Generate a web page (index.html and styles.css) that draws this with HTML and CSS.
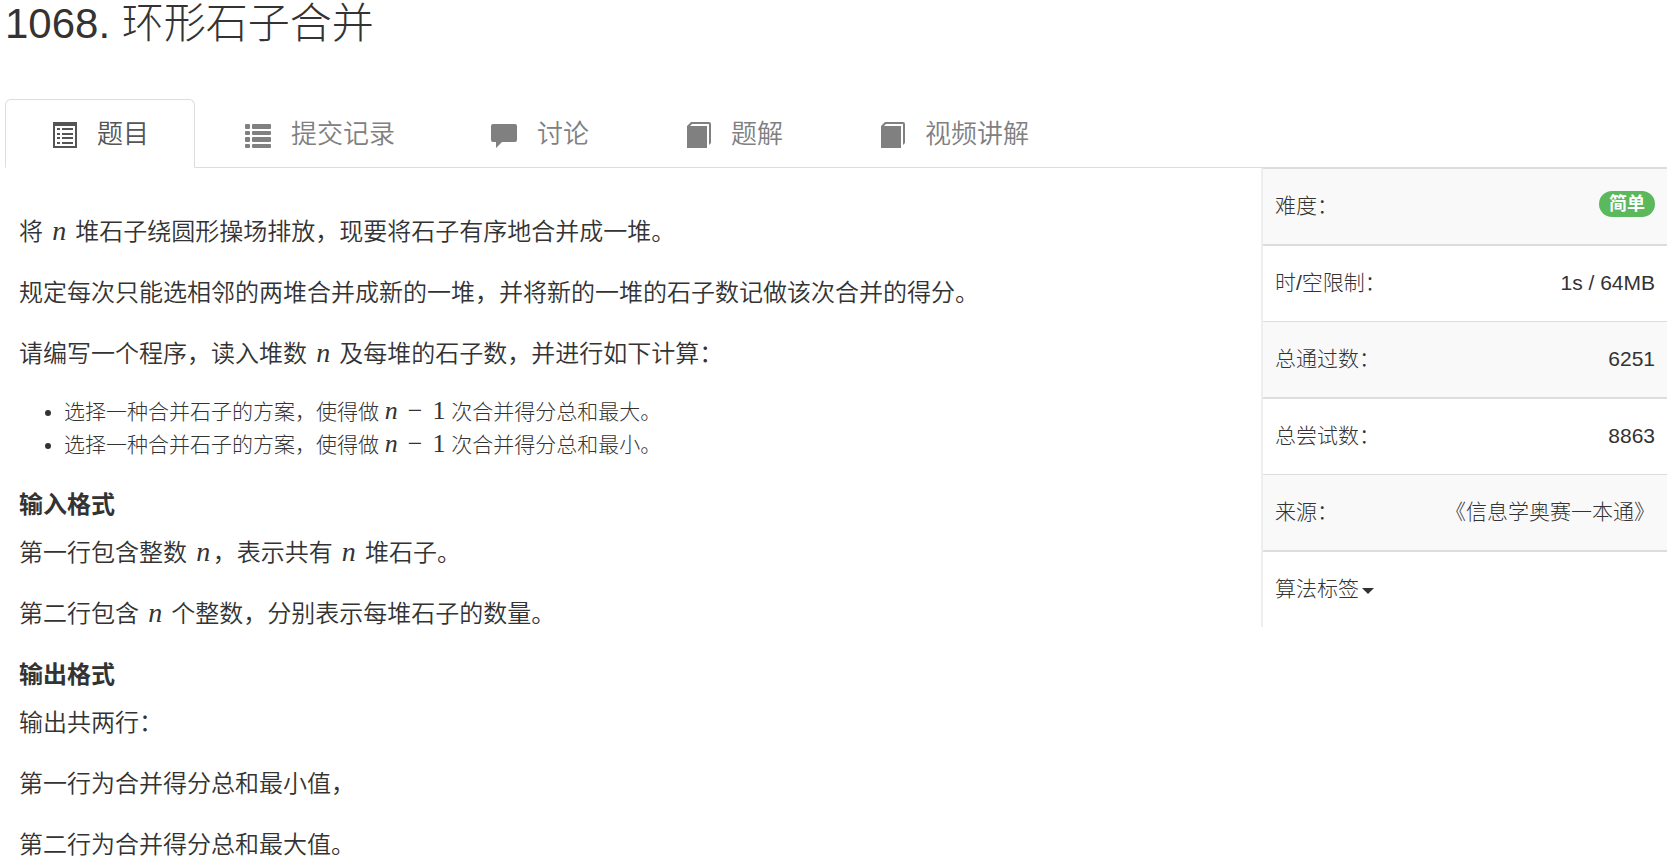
FILE: index.html
```
<!DOCTYPE html>
<html lang="zh-CN">
<head>
<meta charset="utf-8">
<title>1068. 环形石子合并</title>
<link rel="stylesheet" href="styles.css">
</head>
<body>
<div class="page">
  <h1 class="title">1068. 环形石子合并</h1>

  <nav class="tabs">
    <a class="tab tab-active" href="#problem">
      <svg class="icon" viewBox="0 0 26 26"><path fill-rule="evenodd" d="M2 0h24v26H2zM4 4v20h20V4z"/><path d="M6 6h3v2H6zM11 6h11v2H11zM6 11h3v2H6zM11 11h11v2H11zM6 15h3v2H6zM11 15h11v2H11zM6 20h3v2H6zM11 20h11v2H11z"/></svg>
      <span>题目</span>
    </a>
    <a class="tab" href="#submissions">
      <svg class="icon" viewBox="0 0 26 26"><rect x="0" y="2" width="5" height="5" rx="1"/><rect x="7" y="2" width="19" height="5" rx="1"/><rect x="0" y="9" width="5" height="4" rx="1"/><rect x="7" y="9" width="19" height="4" rx="1"/><rect x="0" y="15" width="5" height="5" rx="1"/><rect x="7" y="15" width="19" height="5" rx="1"/><rect x="0" y="22" width="5" height="4" rx="1"/><rect x="7" y="22" width="19" height="4" rx="1"/></svg>
      <span>提交记录</span>
    </a>
    <a class="tab" href="#discussion">
      <svg class="icon" viewBox="0 0 26 26"><path d="M2 2h22q2 0 2 2v14q0 2-2 2H11l-6 6v-6H2q-2 0-2-2V4q0-2 2-2z"/></svg>
      <span>讨论</span>
    </a>
    <a class="tab" href="#solutions">
      <svg class="icon" viewBox="0 0 26 26"><path d="M2 26V4l4-4h18q2 0 2 2v19l-2 2V2H7L5 4h17v22z"/></svg>
      <span>题解</span>
    </a>
    <a class="tab" href="#videos">
      <svg class="icon" viewBox="0 0 26 26"><path d="M2 26V4l4-4h18q2 0 2 2v19l-2 2V2H7L5 4h17v22z"/></svg>
      <span>视频讲解</span>
    </a>
  </nav>

  <div class="columns">
    <main class="problem">
      <p>将 <i class="math">n</i> 堆石子绕圆形操场排放，现要将石子有序地合并成一堆。</p>
      <p>规定每次只能选相邻的两堆合并成新的一堆，并将新的一堆的石子数记做该次合并的得分。</p>
      <p>请编写一个程序，读入堆数 <i class="math">n</i> 及每堆的石子数，并进行如下计算：</p>
      <ul class="goals">
        <li>选择一种合并石子的方案，使得做 <span class="formula"><i>n</i><span class="operator">−</span>1</span> 次合并得分总和最大。</li>
        <li>选择一种合并石子的方案，使得做 <span class="formula"><i>n</i><span class="operator">−</span>1</span> 次合并得分总和最小。</li>
      </ul>
      <h2 class="heading">输入格式</h2>
      <p>第一行包含整数 <i class="math">n</i>，表示共有 <i class="math">n</i> 堆石子。</p>
      <p>第二行包含 <i class="math">n</i> 个整数，分别表示每堆石子的数量。</p>
      <h2 class="heading">输出格式</h2>
      <p>输出共两行：</p>
      <p>第一行为合并得分总和最小值，</p>
      <p>第二行为合并得分总和最大值。</p>
    </main>

    <aside class="info">
      <table class="info-table">
        <tr><th scope="row">难度：</th><td><span class="badge">简单</span></td></tr>
        <tr><th scope="row">时/空限制：</th><td>1s / 64MB</td></tr>
        <tr><th scope="row">总通过数：</th><td>6251</td></tr>
        <tr><th scope="row">总尝试数：</th><td>8863</td></tr>
        <tr><th scope="row">来源：</th><td>《信息学奥赛一本通》</td></tr>
        <tr><th scope="row" colspan="2"><button class="tags" type="button">算法标签<span class="caret"></span></button></th></tr>
      </table>
    </aside>
  </div>
</div>
</body>
</html>
```
FILE: styles.css
```
* {
  box-sizing: border-box;
}

body {
  margin: 0;
  background: #fff;
  color: #333;
  font-family: "Liberation Sans", "Noto Sans CJK SC", sans-serif;
  font-size: 21px;
  font-weight: 300;
  line-height: 29px;
}

.page {
  padding: 0 11px 0 5px;
}

.title {
  margin: 0 0 51px;
  font-size: 42px;
  font-weight: 300;
  line-height: 48px;
}

.tabs {
  display: flex;
  gap: 4px;
  border-bottom: 1px solid #ddd;
}

.tab {
  display: flex;
  align-items: center;
  gap: 20px;
  margin-bottom: -1px;
  padding: 16px 45px 15px;
  border: 1px solid transparent;
  border-radius: 6px 6px 0 0;
  color: #808080;
  font-size: 26px;
  font-weight: 350;
  line-height: 36px;
  text-decoration: none;
}

.tab-active {
  border-color: #ddd;
  border-bottom-color: #fff;
  background: #fff;
  color: #555;
}

.icon {
  width: 26px;
  height: 26px;
  margin-top: 2px;
  fill: currentColor;
}

.columns {
  display: flex;
  align-items: flex-start;
}

.problem {
  flex: 1;
  padding: 46px 15px 0 14px;
  font-size: 24px;
  font-weight: 350;
  line-height: 36px;
}

.problem p {
  margin: 0 0 25px;
}

.math,
.formula {
  display: inline-block;
  font-family: "Liberation Serif", serif;
  line-height: 1;
  text-align: center;
}

.math {
  width: 19px;
  font-size: 28px;
}

.formula {
  font-size: 26px;
}

.operator {
  margin: 0 10px;
}

.goals {
  margin: -2px 0 26px;
  padding-left: 45px;
  font-size: 21px;
  font-weight: 300;
  line-height: 33px;
}

.heading {
  margin: 0 0 12px;
  font-size: 24px;
  font-weight: 700;
  line-height: 36px;
}

.info {
  flex: 0 0 406px;
  border-left: 2px solid #eee;
}

.info-table {
  width: 100%;
  border-spacing: 0;
}

.info-table th,
.info-table td {
  padding: 22px 12px 24px;
  border-top: 2px solid #ddd;
  font-weight: 300;
  text-align: left;
}

.info-table td {
  text-align: right;
}

.info-table tr:nth-child(odd) {
  background: #f9f9f9;
}

.info-table tr:nth-child(1) > *,
.info-table tr:nth-child(3) > *,
.info-table tr:nth-child(5) > * {
  border-top-width: 1px;
}

.badge {
  display: block;
  width: fit-content;
  margin: 0 0 3px auto;
  padding: 0 10px;
  border-radius: 15px;
  background: #5cb85c;
  color: #fff;
  font-size: 18px;
  font-weight: 700;
  line-height: 26px;
}

.tags {
  display: flex;
  align-items: center;
  gap: 3px;
  padding: 0;
  border: 0;
  background: none;
  color: inherit;
  font: inherit;
}

.caret {
  margin-top: 4px;
  border-top: 6px solid;
  border-right: 6px solid transparent;
  border-left: 6px solid transparent;
}
```
